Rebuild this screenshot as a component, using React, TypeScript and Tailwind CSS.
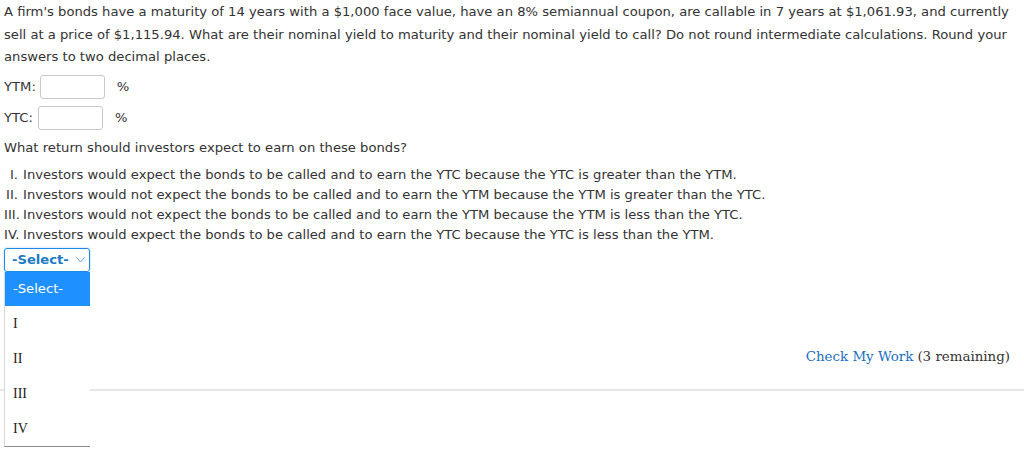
const options = [
    { n: 'I.', text: 'Investors would expect the bonds to be called and to earn the YTC because the YTC is greater than the YTM.' },
    { n: 'II.', text: 'Investors would not expect the bonds to be called and to earn the YTM because the YTM is greater than the YTC.' },
    { n: 'III.', text: 'Investors would not expect the bonds to be called and to earn the YTM because the YTM is less than the YTC.' },
    { n: 'IV.', text: 'Investors would expect the bonds to be called and to earn the YTC because the YTC is less than the YTM.' },
]

function AnswerRow({ label, inputClass }: { label: string, inputClass: string }) {
    return <div className="flex items-center h-[24px]">
        <span>{ label }</span>
        <div className={ `h-[24px] w-[65px] border border-[#c8c8c8] rounded-[3px] bg-white ${inputClass}` } />
        <span className="ml-[12px]">%</span>
    </div>
}

export default function App() {
    return <div className="relative w-[1024px] h-[462px] overflow-hidden bg-white text-[#333] text-[13.15px] font-['DejaVu_Sans',Verdana,sans-serif]">
        <div className="pl-[4px] pr-[8px]">
            <p className="pt-[1px] leading-[22.6px]">
                A firm's bonds have a maturity of 14 years with a $1,000 face value, have an 8% semiannual coupon, are callable in 7 years at $1,061.93, and currently sell at a price of $1,115.94. What are their nominal yield to maturity and their nominal yield to call? Do not round intermediate calculations. Round your answers to two decimal places.
            </p>
            <div className="mt-[6px] flex flex-col gap-[7px]">
                <AnswerRow label="YTM:" inputClass="ml-[4px]" />
                <AnswerRow label="YTC:" inputClass="ml-[5px]" />
            </div>
            <p className="mt-[8px] leading-[20px]">What return should investors expect to earn on these bonds?</p>
            <div className="mt-[7px] flex flex-col">
                {
                    options.map(item => <div key={ item.n } className="flex leading-[20px]">
                        <span className="w-[14px] text-right">{ item.n }</span>
                        <span className="ml-[5px]">{ item.text }</span>
                    </div>)
                }
            </div>
            <div className="relative mt-[3px] w-[86px]">
                <div className="h-[24px] border border-[#1e88e5] rounded-[3px] flex items-center pl-[7px] font-bold text-[#1b7ac4] shadow-[0_0_2px_#90c8f0]">
                    -Select-
                    <svg className="ml-auto mr-[4px]" width="9" height="6" viewBox="0 0 9 6">
                        <path d="M0.5 0.5 L4.5 5 L8.5 0.5" fill="none" stroke="#5aa6dc" strokeWidth="1" />
                    </svg>
                </div>
                <div className="absolute left-0 top-[24px] w-[86px] z-10 bg-white border-l border-l-[#d8d8d8] border-b border-b-[#8a8a8a]">
                    <div className="h-[34px] bg-[#1e90ff] text-white flex items-center pl-[8px]">-Select-</div>
                    {
                        ['I', 'II', 'III', 'IV'].map(r => <div key={ r } className="h-[35px] flex items-center pl-[8px] font-['Liberation_Serif',serif] text-[14px] text-[#222]">
                            { r }
                        </div>)
                    }
                </div>
            </div>
            <div className="mt-[73px] flex justify-end pr-[6px] font-['DejaVu_Serif',Georgia,serif] text-[13.4px] leading-[24px]">
                <span className="text-[#1a6fbf]">Check My Work</span>
                <span className="ml-[4px]">(3 remaining)</span>
            </div>
        </div>
        <div className="mt-[20px] h-[2px] bg-[#e6e6e6]" />
    </div>
}
